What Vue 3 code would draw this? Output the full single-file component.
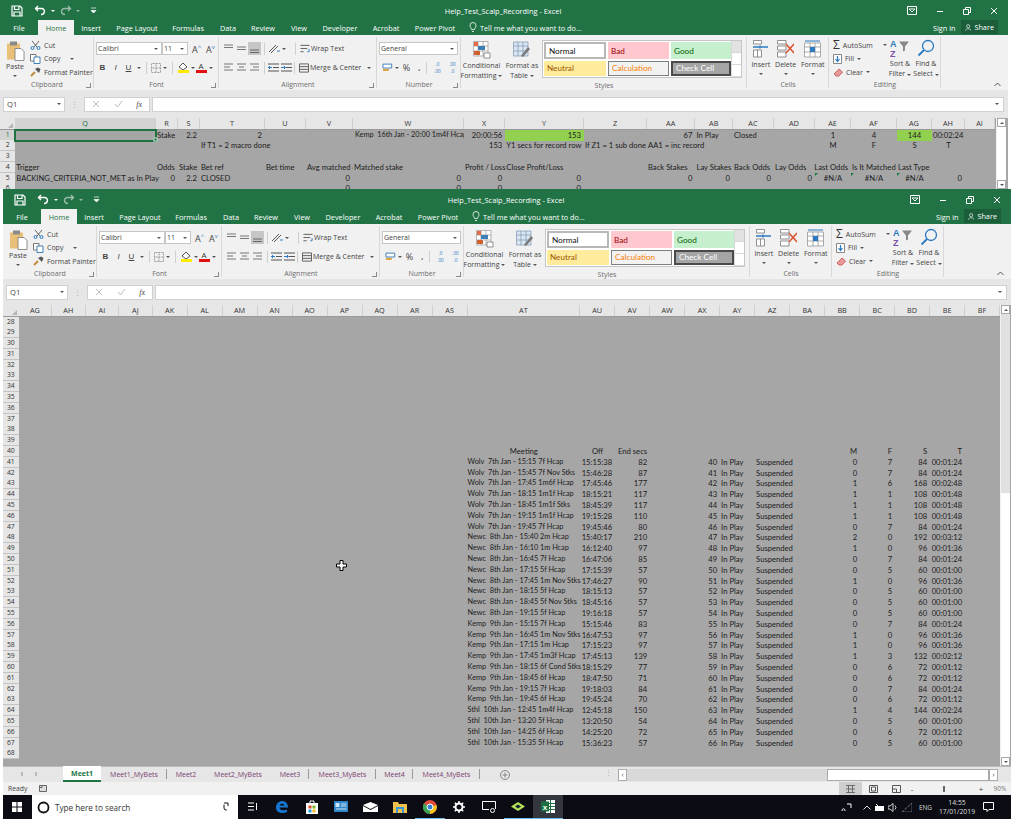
<template>
  <div class="desktop">
    <div v-for="win in windows" :key="win.id" :class="['window', win.id]">
      <!-- title bar + tabs -->
      <header class="titlebar">
        <div class="qat">
          <svg width="12" height="12" viewBox="0 0 12 12"><path d="M1 1H9L11 3V11H1Z M3.5 1V4.5H8V1 M3 11V7H9V11" fill="none" stroke="#fff" stroke-width="1.2"/></svg>
          <svg width="13" height="11" viewBox="0 0 13 11"><path d="M4 1L1.5 3.5L4 6 M2 3.5H7.5C11.5 3.5 11.5 9.5 7 9.5" fill="none" stroke="#fff" stroke-width="1.4"/></svg>
          <span class="caret w"></span>
          <svg width="13" height="11" viewBox="0 0 13 11" class="dim"><path d="M9 1L11.5 3.5L9 6 M11 3.5H5.5C1.5 3.5 1.5 9.5 6 9.5" fill="none" stroke="#9bbcaa" stroke-width="1.4"/></svg>
          <span class="caret d"></span>
          <svg width="7" height="7" viewBox="0 0 7 7" class="qat-more"><path d="M1 1H6 M1 3.5H6L3.5 6Z" fill="#fff" stroke="#fff" stroke-width=".7"/></svg>
        </div>
        <div class="doc-title">Help_Test_Scalp_Recording - Excel</div>
        <div class="win-btns">
          <svg width="10" height="9" viewBox="0 0 10 9"><path d="M.5.5H9.5V8.5H.5Z M2 3H8L5 6Z" fill="none" stroke="#fff"/></svg>
          <svg width="8" height="8" viewBox="0 0 8 8"><path d="M1 4.5H7" stroke="#fff"/></svg>
          <svg width="8" height="8" viewBox="0 0 8 8"><path d="M.5 2.5H5.5V7.5H.5Z M2.5 2.5V.5H7.5V5.5H5.5" fill="none" stroke="#fff"/></svg>
          <svg width="8" height="8" viewBox="0 0 8 8"><path d="M1 1L7 7M7 1L1 7" stroke="#fff"/></svg>
        </div>
      </header>
      <nav class="tabs">
        <span v-for="t in tabs" :key="t.name" :class="['tab', { on: t.name === 'Home' }]" :style="{ width: t.w + 'px' }">{{ t.name }}</span>
        <span class="tell">
          <svg width="8" height="11" viewBox="0 0 8 11"><path d="M2.5 7.5C2.5 6 1 5.500 1 3.500A3 3 0 0 1 7 3.500C7 5.500 5.500 6 5.500 7.500Z M3 9.500H5" fill="none" stroke="#fff" stroke-width=".8"/></svg>
          Tell me what you want to do...
        </span>
        <span class="signin">Sign in</span>
        <span class="share">
          <svg width="10" height="11" viewBox="0 0 10 11"><circle cx="5" cy="3.500" r="2.500" fill="none" stroke="#fff"/><path d="M.5 10.500C1 6.500 9 6.500 9.500 10.500" fill="none" stroke="#fff"/></svg>
          Share
        </span>
      </nav>

      <!-- ribbon -->
      <section class="ribbon">
        <div class="group" style="width: 94px">
          <div class="body clip">
            <div class="big paste">
              <svg width="19" height="21" viewBox="0 0 19 21"><rect x="1" y="3" width="13" height="16" fill="#e8c078"/><rect x="4" y="1" width="7" height="4" fill="#8a8a8a"/><path d="M9 8H15L18 11V20H9Z" fill="#fff" stroke="#777" stroke-width=".8"/></svg>
              <span>Paste</span><i class="caret"></i>
            </div>
            <div class="small-list">
              <div class="small"><svg width="11" height="10" viewBox="0 0 11 10"><path d="M2 1L7 7M9 1L4 7" stroke="#555" stroke-width=".9"/><circle cx="2.500" cy="8" r="1.500" fill="none" stroke="#2b79c2"/><circle cx="8.500" cy="8" r="1.500" fill="none" stroke="#2b79c2"/></svg>Cut</div>
              <div class="small"><svg width="11" height="10" viewBox="0 0 11 10"><path d="M.5.5H6V7H.5Z" fill="#fff" stroke="#777"/><path d="M4 3H10V9.500H4Z" fill="#fff" stroke="#3f7fb8"/></svg>Copy<i class="caret sp"></i></div>
              <div class="small"><svg width="11" height="10" viewBox="0 0 11 10"><path d="M1 9L5 5" stroke="#c48a3a" stroke-width="2"/><path d="M5 2L9 6L10.500 2L8 .5Z" fill="#555"/></svg>Format Painter</div>
            </div>
          </div>
          <div class="label">Clipboard<i class="launch"></i></div>
        </div>

        <div class="group" style="width: 125px">
          <div class="body col">
            <div class="line">
              <div class="combo" style="width: 66px">Calibri<i class="caret"></i></div>
              <div class="combo" style="width: 26px">11<i class="caret"></i></div>
              <span class="bump">A<sup>^</sup></span><span class="bump">A<sup class="blue">v</sup></span>
            </div>
            <div class="line fmt">
              <b class="ic">B</b><em class="ic">I</em><u class="ic">U</u><i class="caret"></i>
              <i class="vsep"></i>
              <svg class="ic" width="10" height="10" viewBox="0 0 10 10"><path d="M.5.5H9.500V9.500H.5Z M5 .5V9.500 M.5 5H9.500" fill="none" stroke="#9a9a9a" stroke-dasharray="1 .5"/></svg><i class="caret"></i>
              <i class="vsep"></i>
              <span class="swatch"><svg width="11" height="8" viewBox="0 0 11 8"><path d="M5 1L9 5L5 8L1 5Z" fill="#fff" stroke="#555"/></svg><i style="background: #ffeb00"></i></span><i class="caret"></i>
              <span class="swatch"><span class="a">A</span><i style="background: #e01010"></i></span><i class="caret"></i>
            </div>
          </div>
          <div class="label">Font<i class="launch"></i></div>
        </div>

        <div class="group" style="width: 158px">
          <div class="body col">
            <div class="line al">
              <svg class="al-ic" viewBox="0 0 13 13"><path d="M2 3H11M2 5.500H11" stroke="#777"/></svg>
              <svg class="al-ic" viewBox="0 0 13 13"><path d="M2 5H11M2 7.500H11" stroke="#777"/></svg>
              <svg class="al-ic sel" viewBox="0 0 13 13"><path d="M2 8H11M2 10.500H11" stroke="#666"/></svg>
              <i class="vsep"></i>
              <svg class="ic2" width="12" height="11" viewBox="0 0 12 11"><path d="M1 9L8 2 M3 10L10 3" stroke="#555"/><path d="M9 8H12" stroke="#3f7fb8"/></svg><i class="caret"></i>
              <i class="vsep gapped"></i>
              <svg width="10" height="10" viewBox="0 0 11 10" class="ic3"><path d="M.5 1H10.500 M.5 4.500H8 M.5 8H4" stroke="#555"/><path d="M8 8H10V5" fill="none" stroke="#2b79c2"/></svg>
              <span class="txt">Wrap Text</span>
            </div>
            <div class="line al">
              <svg class="al-ic" viewBox="0 0 13 13"><path d="M2 3H11M2 6H8M2 9H11" stroke="#777"/></svg>
              <svg class="al-ic" viewBox="0 0 13 13"><path d="M2 3H11M4 6H9M2 9H11" stroke="#777"/></svg>
              <svg class="al-ic" viewBox="0 0 13 13"><path d="M2 3H11M5 6H11M2 9H11" stroke="#777"/></svg>
              <i class="vsep"></i>
              <svg class="ic2" width="11" height="9" viewBox="0 0 11 9"><path d="M0 1H11M5 4.500H11M0 8H11" stroke="#555"/><path d="M4 4.500H0M2 3L.5 4.500L2 6" fill="none" stroke="#2b79c2"/></svg>
              <svg class="ic2" width="11" height="9" viewBox="0 0 11 9"><path d="M0 1H11M5 4.500H11M0 8H11" stroke="#555"/><path d="M0 4.500H4M3 3L4.500 4.500L3 6" fill="none" stroke="#2b79c2"/></svg>
              <i class="vsep tight"></i>
              <svg width="10" height="10" viewBox="0 0 11 10" class="ic3"><path d="M.5.5H10.500V9.500H.5Z M.5 3.500H10.500M.5 6.500H10.500" fill="none" stroke="#555"/></svg>
              <span class="txt">Merge &amp; Center</span><i class="caret"></i>
            </div>
          </div>
          <div class="label">Alignment<i class="launch"></i></div>
        </div>

        <div class="group" style="width: 84px">
          <div class="body col">
            <div class="line"><div class="combo" style="width: 79px">General<i class="caret"></i></div></div>
            <div class="line num">
              <svg width="11" height="10" viewBox="0 0 11 10"><path d="M1 1H10V5H1Z" fill="#fff" stroke="#3f7fb8"/><path d="M1 7H7" stroke="#d9a23a" stroke-width="2"/></svg><i class="caret"></i>
              <span class="pct">%</span><span class="comma">,</span><i class="vsep"></i>
              <span class="dec">.0<br />.00</span><span class="dec">.00<br />.0</span>
            </div>
          </div>
          <div class="label">Number<i class="launch"></i></div>
        </div>

        <div class="group" style="width: 286px">
          <div class="body styles">
            <div class="big wide cond">
              <svg width="18" height="18" viewBox="0 0 18 18"><path d="M.5.5H15V15H.5Z M.5 5H15M.5 10H15M5 .5V15M10 .5V15" fill="#fff" stroke="#9a9a9a" stroke-width=".7"/><rect x="1" y="1" width="4" height="4" fill="#e06a4a"/><rect x="5" y="5" width="7" height="4" fill="#3f7fb8"/><rect x="1" y="10" width="6" height="4" fill="#d06030"/><path d="M11 12H17V17H11Z" fill="#fff" stroke="#666" stroke-width=".7"/></svg>
              <span>Conditional</span><span>Formatting<i class="caret in"></i></span>
            </div>
            <div class="big wide asTable">
              <svg width="18" height="18" viewBox="0 0 18 18"><path d="M.5 1H15V15H.5Z M.5 5H15M.5 10H15M5 1V15M10 1V15" fill="#dbe6f2" stroke="#7a97b5" stroke-width=".7"/><path d="M8 15L15 6L17 8L10 16Z" fill="#777"/></svg>
              <span>Format as</span><span>Table<i class="caret in"></i></span>
            </div>
            <div class="gallery">
              <div class="cells">
                <div class="st normal">Normal</div><div class="st bad">Bad</div><div class="st good">Good</div>
                <div class="st neutral">Neutral</div><div class="st calc">Calculation</div><div class="st check">Check Cell</div>
              </div>
              <div class="gal-scroll"><i class="up"></i><i class="dn"></i><i class="more"></i></div>
            </div>
          </div>
          <div class="label">Styles</div>
        </div>

        <div class="group" style="width: 82px">
          <div class="body cellbtns">
            <div class="big">
              <svg width="17" height="18" viewBox="0 0 17 18"><path d="M1.500 .5H9.500V4H1.500Z M1.500 10H9.500V17H1.500Z M5.500 10V17" fill="#fff" stroke="#777" stroke-width=".8"/><path d="M1 7H16M8 5.500V8.500" stroke="#2b79c2" stroke-width="1.300"/></svg>
              <span>Insert</span><i class="caret"></i>
            </div>
            <div class="big">
              <svg width="17" height="18" viewBox="0 0 17 18"><path d="M.5 .5H9V4H.5Z M.5 6H9V10H.5Z M.5 12H9V17H.5Z" fill="#fff" stroke="#777" stroke-width=".8"/><path d="M9 4L17 13M17 4L9 13" stroke="#d9542f" stroke-width="1.500"/></svg>
              <span>Delete</span><i class="caret"></i>
            </div>
            <div class="big">
              <svg width="17" height="18" viewBox="0 0 17 18"><path d="M.5 3H16.500V17H.5Z M.5 7H16.500M.5 12H16.500M6 3V17M11 3V17" fill="#fff" stroke="#8a8a8a" stroke-width=".7"/><rect x="6" y="7" width="5" height="5" fill="#2b79c2"/><path d="M1 1H16" stroke="#2b79c2"/></svg>
              <span>Format</span><i class="caret"></i>
            </div>
          </div>
          <div class="label">Cells</div>
        </div>

        <div class="group" style="width: 112px">
          <div class="body editing">
            <div class="small-list">
              <div class="small"><span class="sigma">Σ</span>AutoSum<i class="caret sp"></i></div>
              <div class="small"><svg width="9" height="10" viewBox="0 0 9 10"><path d="M.5.5H8.500V9.500H.5Z" fill="#fff" stroke="#888"/><path d="M4.500 2V7M2.500 5L4.500 7.500L6.500 5" fill="none" stroke="#2b79c2" stroke-width="1.200"/></svg>Fill<i class="caret"></i></div>
              <div class="small"><svg width="10" height="9" viewBox="0 0 10 9"><path d="M1 6L6 1L9.500 4L6 8H3Z" fill="#e89a9a" stroke="#c66"/></svg>Clear<i class="caret"></i></div>
            </div>
            <div class="big">
              <svg width="20" height="19" viewBox="0 0 20 19"><path d="M9 3H19L15 8V12L13 13V8Z" fill="#888"/><text x="0" y="8" class="az a1">A</text><text x="0" y="18" class="az z1">Z</text></svg>
              <span>Sort &amp;</span><span>Filter<i class="caret in"></i></span>
            </div>
            <div class="big">
              <svg width="18" height="18" viewBox="0 0 18 18"><circle cx="11" cy="7" r="5.500" fill="none" stroke="#2b79c2" stroke-width="1.300"/><path d="M7 11L1.500 16.500" stroke="#2b79c2" stroke-width="1.800"/></svg>
              <span>Find &amp;</span><span>Select<i class="caret in"></i></span>
            </div>
          </div>
          <div class="label">Editing</div>
        </div>

        <svg class="collapse" width="7" height="5" viewBox="0 0 7 5"><path d="M.5 4L3.500 1L6.500 4" fill="none" stroke="#555"/></svg>
      </section>

      <!-- formula bar -->
      <div class="fbar">
        <div class="namebox">Q1<i class="caret"></i></div>
        <span class="dots">⋮</span>
        <div class="fbtns">
          <svg width="8" height="8" viewBox="0 0 8 8"><path d="M1 1L7 7M7 1L1 7" stroke="#bbb"/></svg>
          <svg width="9" height="8" viewBox="0 0 9 8"><path d="M1 4L3.500 7L8 1" fill="none" stroke="#bbb"/></svg>
          <em>fx</em>
        </div>
        <div class="finput"><i class="caret"></i></div>
      </div>

      <!-- sheet -->
      <div class="sheet">
        <div class="grid">
          <div class="row head" :style="{ gridTemplateColumns: win.template }">
            <div class="corner"><i></i></div>
            <div v-for="c in win.cols" :key="c.n" :class="['colh', { sel: c.n === 'Q' }]">{{ c.n }}</div>
          </div>
          <div v-for="r in win.rows" :key="r.n" class="row" :style="{ gridTemplateColumns: win.template }">
            <div :class="['rowh', { sel: win.id === 'back' && r.n === 1 }]">{{ r.n }}</div>
            <template v-for="c in win.cols" :key="c.n">
              <div v-if="r.c[c.n]" :class="['cell', r.c[c.n].a, r.c[c.n].k]">
                <span>{{ r.c[c.n].t }}</span>
              </div>
              <div v-else class="cell"></div>
            </template>
          </div>
        </div>
        <div class="vscroll">
          <span class="arrow up"></span>
          <div class="track"><div class="thumb"></div></div>
          <span class="arrow dn"></span>
        </div>
      </div>

      <!-- sheet tabs + status bar only show on the window in front -->
      <template v-if="win.id === 'front'">
        <div class="sheettabs">
          <div class="tab-nav"><i></i><i></i></div>
          <span v-for="s in sheets" :key="s.n" :class="['stab', { on: s.on, sep: s.sep }]" :style="{ width: s.w + 'px' }">{{ s.n }}</span>
          <svg class="addsheet" width="10" height="10" viewBox="0 0 10 10"><circle cx="5" cy="5" r="4.500" fill="none" stroke="#888"/><path d="M5 2.500V7.500M2.500 5H7.500" stroke="#888"/></svg>
          <span class="sdots">⋮</span>
          <div class="hscroll"><span class="hbtn">‹</span><div class="htrack"></div><div class="hthumb"></div><span class="hbtn">›</span></div>
        </div>
        <footer class="status">
          <span>Ready</span>
          <svg class="macro" width="8" height="7" viewBox="0 0 8 7"><path d="M.5.5H7.500V6.500H.5Z M.5 2.500H3V.5" fill="#ddd" stroke="#666"/></svg>
          <div class="views">
            <span class="view on"><svg width="9" height="8" viewBox="0 0 9 8"><path d="M0 .5H9M0 7.500H9M2.500 .5V7.500M6.500 .5V7.500M0 4H9" stroke="#555" stroke-width=".8"/></svg></span>
            <span class="view"><svg width="9" height="8" viewBox="0 0 9 8"><path d="M.5.5H8.500V7.500H.5Z M2.500 2H6.500V6H2.500Z" fill="none" stroke="#555"/></svg></span>
            <span class="view"><svg width="9" height="8" viewBox="0 0 9 8"><path d="M.5.5H8.500V7.500H.5Z M.5 4H4.500V7.500" fill="none" stroke="#555"/></svg></span>
            <span class="zoomctl">-</span>
            <i class="zoomthumb"></i>
            <span class="zoomctl plus">+</span>
            <span class="pctzoom">90%</span>
          </div>
        </footer>
      </template>
    </div>

    <!-- taskbar -->
    <div class="taskbar">
      <svg class="winlogo" width="10" height="10" viewBox="0 0 10 10"><path d="M0 0H4.500V4.500H0Z M5.500 0H10V4.500H5.500Z M0 5.500H4.500V10H0Z M5.500 5.500H10V10H5.500Z" fill="#fff"/></svg>
      <div class="search">
        <svg width="13" height="13" viewBox="0 0 13 13"><circle cx="6.500" cy="6.500" r="5" fill="none" stroke="#111" stroke-width="1.800"/></svg>
        <span>Type here to search</span>
        <svg class="mic" width="6" height="10" viewBox="0 0 6 10"><path d="M1 1H5V6A2 2 0 0 1 1 6Z" fill="none" stroke="#111" stroke-dasharray="7 4"/></svg>
      </div>
      <div class="apps">
        <span class="app"><svg width="10" height="9" viewBox="0 0 10 9"><path d="M0 1H6M0 4.500H6M0 8H6M8.500 1V8" stroke="#fff"/></svg></span>
        <span class="app"><svg width="14" height="14" viewBox="0 0 14 14"><path d="M1 8C1 3 4 1 7.500 1C11 1 13 4 13 7.500H4.500C5 10.500 9 11 12 9.500V12C8 14 1 13 1 8Z M4.500 5.500H9.500C9 3 5.500 3 4.500 5.500Z" fill="#1577d0" fill-rule="evenodd"/></svg></span>
        <span class="app"><svg width="14" height="14" viewBox="0 0 14 14"><rect x="1" y="3" width="12" height="11" fill="#fff"/><path d="M5 3V1H9V3" fill="none" stroke="#fff"/><rect x="3.500" y="5.500" width="3" height="3" fill="#e94e2a"/><rect x="7.500" y="5.500" width="3" height="3" fill="#7cb82f"/><rect x="3.500" y="9.500" width="3" height="3" fill="#1e9be0"/><rect x="7.500" y="9.500" width="3" height="3" fill="#f5b81e"/></svg></span>
        <span class="app"><svg width="14" height="11" viewBox="0 0 14 11"><rect width="14" height="11" fill="#2f86c9"/><rect x="1.500" y="2" width="4" height="4" fill="#cfe6f7"/><path d="M7 3H12.500M7 5H12.500M2 8H12.500" stroke="#cfe6f7"/></svg></span>
        <span class="app"><svg width="15" height="10" viewBox="0 0 15 10"><path d="M0 3L7.500 0L15 3L7.500 7Z M0 4L7.500 8L15 4V10H0Z" fill="#fff"/></svg></span>
        <span class="app"><svg width="14" height="12" viewBox="0 0 14 12"><path d="M0 1H5L6 3H14V12H0Z" fill="#f0c14b"/><rect x="3" y="6" width="8" height="6" fill="#3a9bd8"/><rect x="5" y="8" width="4" height="4" fill="#f0c14b"/></svg></span>
        <span class="app open"><svg width="14" height="14" viewBox="0 0 14 14"><circle cx="7" cy="7" r="7" fill="#e14b3b"/><path d="M7 7L13.500 5A7 7 0 0 1 7 14Z" fill="#f5c518"/><path d="M7 7L7 14A7 7 0 0 1 .9 3.500Z" fill="#3aa655"/><circle cx="7" cy="7" r="3" fill="#3b82d6" stroke="#fff"/></svg></span>
        <span class="app"><svg width="12" height="12" viewBox="0 0 12 12"><circle cx="6" cy="6" r="3.500" fill="none" stroke="#fff" stroke-width="2"/><path d="M6 0V2.500M6 9.500V12M0 6H2.500M9.500 6H12M1.800 1.800L3.500 3.500M8.500 8.500L10.200 10.200M10.200 1.800L8.500 3.500M3.500 8.500L1.800 10.200" stroke="#fff" stroke-width="1.500"/></svg></span>
        <span class="app"><svg width="14" height="12" viewBox="0 0 14 12"><path d="M.5.5H13.500V8M.5.5V8.500H7" fill="none" stroke="#fff"/><circle cx="10.500" cy="9.500" r="2" fill="none" stroke="#fff"/></svg></span>
        <span class="app open"><svg width="14" height="9" viewBox="0 0 14 9"><path d="M7 0L14 4.500L7 9L0 4.500Z" fill="#b6e25a"/><path d="M7 2.500L10 4.500L7 6.500L4 4.500Z" fill="#123"/></svg></span>
        <span class="app open active"><svg width="14" height="13" viewBox="0 0 14 13"><rect x="5" y="0" width="9" height="13" fill="#fff"/><path d="M5 3.500H14M5 6.500H14M5 9.500H14M9.500 0V13" stroke="#1d6f42"/><rect x="0" y="1.500" width="8" height="10" fill="#1d7044"/><text x="1.800" y="9.500" class="xl">x</text></svg></span>
      </div>
      <div class="tray">
        <svg width="11" height="10" viewBox="0 0 11 10"><path d="M1 9C1 6 4 6 4 9M6 2H10V6" fill="none" stroke="#fff"/></svg>
        <svg class="t1" width="8" height="5" viewBox="0 0 8 5"><path d="M.5 4.500L4 1L7.500 4.500" fill="none" stroke="#ddd"/></svg>
        <svg width="9" height="7" viewBox="0 0 9 7"><rect y="2" width="9" height="5" fill="#fff"/><path d="M1 0L3 2" stroke="#fff"/></svg>
        <svg width="10" height="9" viewBox="0 0 10 9"><path d="M0 3H2L5 .5V8.500L2 6H0Z M7 2.500Q9 4.500 7 6.500" fill="none" stroke="#fff" stroke-width=".8"/></svg>
        <svg width="10" height="9" viewBox="0 0 10 9"><path d="M0 9L10 0V9Z" fill="none" stroke="#aaa" stroke-dasharray="1 1"/></svg>
        <span class="eng">ENG</span>
        <div class="clock"><span>14:55</span><span>17/01/2019</span></div>
        <svg class="note" width="11" height="10" viewBox="0 0 11 10"><path d="M.5.5H10.500V7.500H6L4 9.500V7.500H.5Z" fill="none" stroke="#fff"/></svg>
      </div>
    </div>

    <!-- excel cell cursor -->
    <svg class="cursor" width="11" height="11" viewBox="0 0 11 11"><path d="M4 .5H7V4H10.500V7H7V10.500H4V7H.5V4H4Z" fill="#fff" stroke="#000"/></svg>
  </div>
</template>

<script setup>
const tabs = [
  { name: 'File', w: 38 }, { name: 'Home', w: 36 }, { name: 'Insert', w: 34 },
  { name: 'Page Layout', w: 58 }, { name: 'Formulas', w: 44 }, { name: 'Data', w: 36 },
  { name: 'Review', w: 34 }, { name: 'View', w: 38 }, { name: 'Developer', w: 44 },
  { name: 'Acrobat', w: 48 }, { name: 'Power Pivot', w: 50 }
]

const sheets = [
  { n: 'Meet1', w: 38, on: true }, { n: 'Meet1_MyBets', w: 66, sep: true },
  { n: 'Meet2', w: 38 }, { n: 'Meet2_MyBets', w: 66 }, { n: 'Meet3', w: 38, sep: true },
  { n: 'Meet3_MyBets', w: 67, sep: true }, { n: 'Meet4', w: 37, sep: true },
  { n: 'Meet4_MyBets', w: 67, sep: true }
]

const meetings = [
  ['Wolv  7th Jan - 15:15 7f Hcap', '15:15:38', 82, 0, 7, 84, '00:01:24'],
  ['Wolv  7th Jan - 15:45 7f Nov Stks', '15:46:28', 87, 0, 7, 84, '00:01:24'],
  ['Wolv  7th Jan - 17:45 1m6f Hcap', '17:45:46', 177, 1, 6, 168, '00:02:48'],
  ['Wolv  7th Jan - 18:15 1m1f Hcap', '18:15:21', 117, 1, 1, 108, '00:01:48'],
  ['Wolv  7th Jan - 18:45 1m1f Stks', '18:45:39', 117, 1, 1, 108, '00:01:48'],
  ['Wolv  7th Jan - 19:15 1m1f Hcap', '19:15:28', 110, 1, 1, 108, '00:01:48'],
  ['Wolv  7th Jan - 19:45 7f Hcap', '19:45:46', 80, 0, 7, 84, '00:01:24'],
  ['Newc  8th Jan - 15:40 2m Hcap', '15:40:17', 210, 2, 0, 192, '00:03:12'],
  ['Newc  8th Jan - 16:10 1m Hcap', '16:12:40', 97, 1, 0, 96, '00:01:36'],
  ['Newc  8th Jan - 16:45 7f Hcap', '16:47:06', 85, 0, 7, 84, '00:01:24'],
  ['Newc  8th Jan - 17:15 5f Hcap', '17:15:39', 57, 0, 5, 60, '00:01:00'],
  ['Newc  8th Jan - 17:45 1m Nov Stks', '17:46:27', 90, 1, 0, 96, '00:01:36'],
  ['Newc  8th Jan - 18:15 5f Hcap', '18:15:13', 57, 0, 5, 60, '00:01:00'],
  ['Newc  8th Jan - 18:45 5f Nov Stks', '18:45:16', 57, 0, 5, 60, '00:01:00'],
  ['Newc  8th Jan - 19:15 5f Hcap', '19:16:18', 57, 0, 5, 60, '00:01:00'],
  ['Kemp  9th Jan - 15:15 7f Hcap', '15:15:46', 83, 0, 7, 84, '00:01:24'],
  ['Kemp  9th Jan - 16:45 1m Nov Stks', '16:47:53', 97, 1, 0, 96, '00:01:36'],
  ['Kemp  9th Jan - 17:15 1m Hcap', '17:15:23', 97, 1, 0, 96, '00:01:36'],
  ['Kemp  9th Jan - 17:45 1m3f Hcap', '17:45:13', 139, 1, 3, 132, '00:02:12'],
  ['Kemp  9th Jan - 18:15 6f Cond Stks', '18:15:29', 77, 0, 6, 72, '00:01:12'],
  ['Kemp  9th Jan - 18:45 6f Hcap', '18:47:50', 71, 0, 6, 72, '00:01:12'],
  ['Kemp  9th Jan - 19:15 7f Hcap', '19:18:03', 84, 0, 7, 84, '00:01:24'],
  ['Kemp  9th Jan - 19:45 6f Hcap', '19:45:24', 70, 0, 6, 72, '00:01:12'],
  ['Sthl  10th Jan - 12:45 1m4f Hcap', '12:45:18', 150, 1, 4, 144, '00:02:24'],
  ['Sthl  10th Jan - 13:20 5f Hcap', '13:20:50', 54, 0, 5, 60, '00:01:00'],
  ['Sthl  10th Jan - 14:25 6f Hcap', '14:25:20', 72, 0, 6, 72, '00:01:12'],
  ['Sthl  10th Jan - 15:35 5f Hcap', '15:36:23', 57, 0, 5, 60, '00:01:00']
]

const r = (t) => ({ t, a: 'r' })
const l = (t) => ({ t, a: 'l' })
const c = (t) => ({ t, a: 'c' })

function frontRows() {
  const rows = []
  for (let n = 28; n <= 68; n++) rows.push({ n, c: {} })
  rows[12].c = {
    AT: c('Meeting'), AU: c('Off'), AV: r('End secs'),
    BB: r('M'), BC: r('F'), BD: r('S'), BE: r('T')
  }
  meetings.forEach((m, i) => {
    rows[13 + i].c = {
      AT: { t: m[0], a: 'l', k: 'meet' }, AU: r(m[1]), AV: r(m[2]), AX: r(40 + i), AY: l('In Play'), AZ: l('Suspended'),
      BB: r(m[3]), BC: r(m[4]), BD: r(m[5]), BE: r(m[6])
    }
  })
  return rows
}

const backCols = [
  ['Q', 140.7], ['R', 22], ['S', 22], ['T', 65], ['U', 41], ['V', 47], ['W', 111], ['X', 41.300],
  ['Y', 78.700], ['Z', 63], ['AA', 48.500], ['AB', 37.500], ['AC', 41], ['AD', 41], ['AE', 36],
  ['AF', 46], ['AG', 35], ['AH', 33], ['AI', 30]
]

const backRows = [
  { n: 1, c: {
    Q: { t: '', a: 'l', k: 'selected' }, R: l('Stake'), S: r('2.2'), T: r('2'),
    W: { t: 'Kemp  16th Jan - 20:00 1m4f Hcap', a: 'l', k: 'meet cut' }, X: r('20:00:56'), Y: { t: '153', a: 'r', k: 'green' },
    AA: r('67'), AB: l('In Play'), AC: l('Closed'), AE: c('1'), AF: c('4'),
    AG: { t: '144', a: 'c', k: 'green' }, AH: l('00:02:24')
  } },
  { n: 2, c: {
    T: l('If T1 = 2 macro done'), X: r('153'), Y: l('Y1 secs for record row'), Z: l('If Z1 = 1 sub done'),
    AA: l('AA1 = inc record'), AE: c('M'), AF: c('F'), AG: c('S'), AH: c('T')
  } },
  { n: 3, c: {} },
  { n: 4, c: {
    Q: l('Trigger'), R: l('Odds'), S: l('Stake'), T: l('Bet ref'), U: l('Bet time'),
    V: { t: 'Avg matched odds', a: 'l', k: 'cut' }, W: l('Matched stake'), X: l('Profit / Loss'),
    Y: l('Close Profit/Loss'), AA: l('Back Stakes'), AB: l('Lay Stakes'), AC: l('Back Odds'),
    AD: l('Lay Odds'), AE: r('Last Odds'), AF: l('Is It Matched'), AG: l('Last Type')
  } },
  { n: 5, c: {
    Q: l('BACKING_CRITERIA_NOT_MET as In Play'), R: r('0'), S: r('2.2'), T: l('CLOSED'),
    V: r('0'), W: r('0'), X: r('0'), Y: r('0'), AA: r('0'), AB: r('0'), AC: r('0'), AD: r('0'),
    AE: { t: '#N/A', a: 'c', k: 'flag' }, AF: { t: '#N/A', a: 'c', k: 'flag' },
    AG: { t: '#N/A', a: 'c', k: 'flag' }, AH: r('0')
  } },
  { n: 6, c: { V: r('0'), W: r('0'), X: r('0'), Y: r('0') } }
]

const frontNames = ['AG', 'AH', 'AI', 'AJ', 'AK', 'AL', 'AM', 'AN', 'AO', 'AP', 'AQ', 'AR', 'AS', 'AT',
  'AU', 'AV', 'AW', 'AX', 'AY', 'AZ', 'BA', 'BB', 'BC', 'BD', 'BE', 'BF']
const frontCols = frontNames.map((n, i) => [n, i < 4 ? 33.500 : n === 'AT' ? 112.500 : 35])

function makeWindow(id, cols, rows, rowHead) {
  return {
    id,
    rows,
    cols: cols.map(([n, w]) => ({ n, w })),
    template: `${rowHead}px ` + cols.map((x) => x[1] + 'px').join(' ')
  }
}

const windows = [
  makeWindow('back', backCols, backRows, 15.300),
  makeWindow('front', frontCols, frontRows(), 15.600)
]
</script>

<style scoped>
.desktop {
  position: relative;
  width: 1017px;
  height: 828px;
  overflow: hidden;
  background: #fff;
  font-family: "Open Sans", sans-serif;
  font-size: 7px;
  color: #444;
}

/* windows sit on a free desktop */
.window {
  position: absolute;
  display: flex;
  flex-direction: column;
  background: #f1f1f1;
  overflow: hidden;
}
.back { left: 0; top: 0; width: 1008px; height: 189px; }
.front { left: 3px; top: 189px; width: 1008px; height: 606px; }

.titlebar {
  display: flex;
  align-items: center;
  height: 20px;
  background: #217346;
  color: #fff;
  padding-top: 1px;
  box-sizing: border-box;
}
.qat { display: flex; align-items: center; width: 360px; padding-left: 11px; gap: 4px; box-sizing: border-box; }
.qat svg:first-child { margin-right: 7px; }
.qat-more { margin-left: 6px; }
.doc-title { width: 286px; text-align: center; font-size: 7.400px; }
.win-btns { flex: 1; display: flex; justify-content: flex-end; align-items: center; gap: 19px; padding-right: 10px; }

.tabs {
  display: flex;
  align-items: stretch;
  height: 15px;
  background: #217346;
  color: #fff;
  font-size: 7.300px;
}
.tab { display: flex; align-items: center; justify-content: center; flex: none; }
.tab.on { background: #f1f1f1; color: #217346; }
.tell { display: flex; align-items: center; gap: 3px; margin-left: 9px; }
.signin { display: flex; align-items: center; margin-left: auto; width: 28px; }
.share { display: flex; align-items: center; gap: 3px; background: #1b5e39; padding: 0 4px; margin: 0 10px 0 0; height: 14px; width: 37px; box-sizing: border-box; }

.ribbon {
  position: relative;
  display: flex;
  height: 55px;
  background: #f1f1f1;
  box-sizing: border-box;
  flex: none;
}
.group {
  position: relative;
  display: flex;
  flex-direction: column;
  box-sizing: border-box;
  padding: 2px 0 0;
  flex: none;
}
.group::after {
  content: "";
  position: absolute;
  right: 0;
  top: 2px;
  bottom: 2px;
  width: 1px;
  background: #d8d8d8;
}
.body { height: 42px; display: flex; }
.col { flex-direction: column; padding: 5px 2px 0; gap: 6px; }
.label {
  position: relative;
  text-align: center;
  color: #6d6d6d;
  line-height: 11px;
}
.launch {
  position: absolute;
  right: 3px;
  top: 4px;
  width: 4px;
  height: 4px;
  border-right: 1px solid #888;
  border-bottom: 1px solid #888;
}
.caret {
  display: inline-block;
  flex: none;
  width: 0;
  height: 0;
  border-left: 2px solid transparent;
  border-right: 2px solid transparent;
  border-top: 2px solid #555;
}
.caret.w { border-top-color: #fff; }
.caret.d { border-top-color: #9bbcaa; }
.caret.in { margin-left: 2px; vertical-align: middle; }
.caret.sp { margin-left: 7px; }

.big {
  display: flex;
  flex-direction: column;
  align-items: center;
  line-height: 9.500px;
  white-space: nowrap;
}
.big svg { height: 22px; margin-bottom: 0; }
.big .caret { margin-top: 3px; }
.paste { width: 30px; padding-top: 3px; }
.small-list { display: flex; flex-direction: column; gap: 3.500px; padding-top: 3px; }
.small { display: flex; align-items: center; gap: 3px; white-space: nowrap; height: 10px; }

.line { display: flex; align-items: center; height: 13px; }
.combo {
  display: flex;
  align-items: center;
  justify-content: space-between;
  box-sizing: border-box;
  height: 13px;
  background: #fff;
  border: 1px solid #c6c6c6;
  padding: 0 3px 0 1px;
  margin-right: 0;
}
.bump { margin-left: 4px; width: 10px; font-size: 9px; line-height: 1; }
.bump sup { font-size: 6px; color: #2b79c2; }
.fmt { padding-left: 0; gap: 0; font-size: 8px; }
.fmt .ic { width: 13px; text-align: center; font-family: "Liberation Sans", sans-serif; flex: none; }
.fmt svg.ic { width: 10px; }
.fmt .caret { margin-left: 2px; }
.vsep { flex: none; width: 1px; height: 12px; background: #cfcfcf; margin: 0 3px 0 3px; }
.fmt .vsep { margin: 0 4px 0 5px; }
.swatch { display: flex; flex-direction: column; align-items: center; width: 12px; flex: none; }
.swatch i { width: 11px; height: 2.500px; }
.swatch .a { font-size: 8px; line-height: 8px; color: #333; }

.al { padding-left: 1px; }
.al-ic { flex: none; width: 13px; height: 13px; }
.al-ic.sel { background: #c6c6c6; }
.ic2 { flex: none; margin-right: 2px; }
.vsep.gapped { margin: 0 4px 0 9px; }
.vsep.tight { margin: 0 4px 0 0; }
.ic3 { flex: none; margin-right: 1px; }
.al .txt { white-space: nowrap; margin-right: 6px; }

.num { padding-left: 3px; gap: 2px; }
.pct { font-size: 9px; width: 12px; text-align: center; }
.comma { width: 10px; font-weight: 700; text-align: center; }
.num .vsep { margin: 0 2px 0 0; }
.dec { font-size: 4.600px; line-height: 6.500px; width: 13px; color: #2b79c2; text-align: center; flex: none; }

.styles { padding: 2px 0 0; }
.wide { width: 41px; }
.wide + .wide { width: 40px; }
.cond .caret, .asTable .caret { margin-top: 0; }
.gallery {
  display: flex;
  width: 200px;
  height: 38px;
  background: #fff;
  border: 1px solid #c6c6c6;
  box-sizing: border-box;
  margin-top: 1px;
}
.cells {
  display: grid;
  grid-template-columns: 62px 61px 60px;
  grid-template-rows: 17px 15px;
  gap: 1.500px 2px;
  padding: 1px;
  width: 188px;
  box-sizing: border-box;
}
.st { display: flex; align-items: center; padding-left: 3px; box-sizing: border-box; font-family: "Lato", sans-serif; font-size: 8.200px; }
.normal { border: 2px solid #b8b8b8; color: #111; }
.bad { background: #ffc7ce; color: #9c0006; }
.good { background: #c6efce; color: #006100; }
.neutral { background: #ffeb9c; color: #9c5700; }
.calc { background: #f2f2f2; color: #fa7d00; border: 1px solid #7f7f7f; }
.check { background: #a5a5a5; color: #fff; border: 2px solid #4a4a4a; }
.gal-scroll { width: 10px; margin-left: auto; display: flex; flex-direction: column; }
.gal-scroll i { flex: 1; border-left: 1px solid #d8d8d8; border-bottom: 1px solid #d8d8d8; }
.gal-scroll .up { background: #e2e2e2; }

.cellbtns { justify-content: space-around; padding: 1px 2px 0; }
.editing { padding-left: 4px; }
.editing .small-list { width: 54px; flex: none; }
.editing .big { width: 26px; flex: none; }
.sigma { font-size: 12px; line-height: 10px; color: #333; }
.az { font: 700 9px "Liberation Sans", sans-serif; }
.a1 { fill: #2b79c2; }
.z1 { fill: #7b4fa8; }
.collapse { position: absolute; right: 7px; bottom: 3px; }

.fbar {
  display: flex;
  align-items: center;
  flex: none;
  height: 28px;
  padding: 0 4px 0 3px;
  box-sizing: border-box;
  background: #e6e6e6;
}
.front .fbar { height: 26px; }
.namebox {
  display: flex;
  align-items: center;
  justify-content: space-between;
  width: 62px;
  height: 15px;
  padding: 0 3px;
  box-sizing: border-box;
  background: #fff;
  border: 1px solid #d0d0d0;
  font-size: 7.600px;
}
.dots { width: 19px; text-align: center; color: #aaa; }
.fbtns {
  display: flex;
  align-items: center;
  justify-content: space-around;
  width: 66px;
  height: 15px;
  margin-right: 2px;
  box-sizing: border-box;
  background: #fff;
  border: 1px solid #d0d0d0;
}
.fbtns em { font: italic 8px "Liberation Serif", serif; color: #444; }
.finput {
  flex: 1;
  display: flex;
  justify-content: flex-end;
  align-items: center;
  height: 15px;
  padding-right: 4px;
  box-sizing: border-box;
  background: #fff;
  border: 1px solid #d0d0d0;
}

.sheet { display: flex; flex: 1; min-height: 0; background: #a6a6a6; }
.grid { flex: none; overflow: hidden; background: #a6a6a6; }
.back .grid { width: 995px; }
.front .grid { width: 997px; }
.row {
  display: grid;
  height: 10.800px;
  font: 7.650px/10.800px "Lato", sans-serif;
  color: #1c1c1c;
}
.row.head { height: 10.500px; background: #e6e6e6; border-bottom: 1px solid #9a9a9a; box-sizing: content-box; font-family: "Open Sans", sans-serif; font-size: 7.300px; color: #333; }
.corner { position: relative; }
.corner i {
  position: absolute;
  right: 2px;
  bottom: 1px;
  border-left: 5px solid transparent;
  border-bottom: 5px solid #b4b4b4;
}
.colh { text-align: center; border-right: 1px solid #cfcfcf; box-sizing: border-box; }
.colh.sel, .rowh.sel { background: #d2d2d2; color: #1f7244; }
.rowh {
  text-align: center;
  background: #e6e6e6;
  border-bottom: 1px solid #c4c4c4;
  box-sizing: border-box;
  font-family: "Open Sans", sans-serif;
  font-size: 6.800px;
  line-height: 10px;
  color: #333;
}
.cell {
  position: relative;
  display: flex;
  min-width: 0;
  white-space: pre;
}
.cell.l { justify-content: flex-start; padding-left: 1px; }
.cell.r { justify-content: flex-end; padding-right: 3px; }
.cell.c { justify-content: center; }
.cell.meet { font-size: 7.300px; padding-left: 0; }
.back .cell.meet { padding-left: 2px; }
.cut { overflow: hidden; }
.green { background: #92d050; }
.selected { outline: 2px solid #1f7244; outline-offset: -1px; z-index: 1; }
.selected::after {
  content: "";
  position: absolute;
  right: -2px;
  bottom: -1.500px;
  width: 3px;
  height: 3px;
  background: #1f7244;
  border: 1px solid #fff;
  box-sizing: content-box;
  transform: scale(.8);
}
.flag::before {
  content: "";
  position: absolute;
  left: 0;
  top: 0;
  border-right: 3px solid transparent;
  border-top: 3px solid #0f7b3a;
}

.vscroll { flex: none; display: flex; flex-direction: column; width: 9.500px; margin-left: 1px; background: #f1f1f1; border-left: 1px solid #f1f1f1; box-sizing: border-box; }
.front .vscroll { margin-left: 0; background: #e0e0e0; }
.arrow {
  flex: none;
  height: 9px;
  background: #fff;
  border: 1px solid #a8a8a8;
  box-sizing: border-box;
  position: relative;
}
.arrow::after {
  content: "";
  position: absolute;
  left: 2px;
  top: 2.500px;
  border-left: 2px solid transparent;
  border-right: 2px solid transparent;
}
.arrow.up::after { border-bottom: 2px solid #555; }
.arrow.dn::after { border-top: 2px solid #555; }
.track { flex: 1; background: #e0e0e0; display: flex; flex-direction: column; justify-content: flex-end; }
.thumb { height: 60px; background: #fff; }
.back .thumb { height: 100%; }
.front .thumb { height: 264px; }

.sheettabs {
  display: flex;
  align-items: stretch;
  flex: none;
  height: 16px;
  background: #e6e6e6;
  box-sizing: border-box;
  border-top: 1px solid #bbb;
  font-size: 7px;
}
.tab-nav { display: flex; width: 60px; gap: 12px; padding: 5px 0 0 18px; box-sizing: border-box; flex: none; }
.tab-nav i { width: 2px; height: 4px; background: #bbb; }
.stab { display: flex; align-items: center; justify-content: center; flex: none; color: #7a3b6f; box-sizing: border-box; position: relative; }
.stab.sep::after { content: ""; position: absolute; right: 0; top: 2px; bottom: 3px; width: 1px; background: #999; }
.stab.on { background: #fff; color: #217346; font-weight: 700; border-bottom: 2px solid #217346; margin-top: -1px; }
.addsheet { margin: 3px 0 0 20px; flex: none; }
.sdots { width: 6px; margin: 1px 0 0 95px; color: #aaa; flex: none; text-align: center; }
.hscroll { display: flex; margin: 2px 0 1px 7px; width: 380px; flex: none; position: relative; }
.hbtn { width: 9px; background: #fff; border: 1px solid #aaa; box-sizing: border-box; font-size: 7px; line-height: 10px; text-align: center; flex: none; }
.htrack { width: 200px; background: #d8d8d8; }
.hthumb { width: 162px; background: #fff; border: 1px solid #aaa; box-sizing: border-box; }

.status {
  display: flex;
  align-items: center;
  flex: none;
  height: 13px;
  padding-left: 5px;
  background: #f1f1f1;
  font-size: 6.800px;
}
.macro { margin-left: 12px; }
.views { display: flex; align-items: stretch; height: 13px; margin-left: auto; padding-right: 1px; }
.view { display: flex; align-items: center; justify-content: center; width: 23px; }
.view.on { background: #cfcfcf; }
.zoomctl { width: 8px; text-align: center; line-height: 13px; font-size: 8px; }
.zoomctl.plus { margin-left: 32px; }
.zoomthumb { width: 2px; height: 6px; background: #666; margin: 3.500px 0 0 27px; }
.pctzoom { width: 20px; text-align: center; line-height: 13px; color: #777; font-size: 6.500px; margin-left: 5px; }

.taskbar {
  position: absolute;
  left: 3px;
  top: 795px;
  width: 1008px;
  height: 24px;
  display: flex;
  align-items: stretch;
  background: #0c0d14;
  color: #fff;
}
.winlogo { flex: none; margin: 7px 0 0 9px; }
.search {
  display: flex;
  align-items: center;
  gap: 5px;
  width: 206px;
  margin-left: 10px;
  padding: 0 9px 0 5px;
  box-sizing: border-box;
  flex: none;
  background: #fff;
  color: #333;
  font-size: 8.200px;
}
.mic { margin-left: auto; }
.apps { display: flex; margin-left: 0; }
.app {
  display: flex;
  align-items: center;
  justify-content: center;
  width: 29.500px;
  box-sizing: border-box;
  border-bottom: 1.500px solid transparent;
}
.app.open { border-bottom-color: #76b9ed; }
.app.active { background: #33363d; }
.xl { font: 700 8px "Liberation Sans", sans-serif; fill: #fff; }
.tray { display: flex; align-items: center; gap: 4px; margin-left: auto; padding-right: 17px; }
.t1 { margin-left: 7px; }
.eng { font-size: 6.400px; color: #ddd; margin-left: 3px; }
.clock { display: flex; flex-direction: column; align-items: center; font-size: 6.800px; line-height: 9.500px; width: 42px; color: #ddd; }
.note { margin-left: 1px; }

.cursor { position: absolute; left: 336px; top: 560px; }
</style>

<style>
html, body { margin: 0; background: #fff; }
</style>
